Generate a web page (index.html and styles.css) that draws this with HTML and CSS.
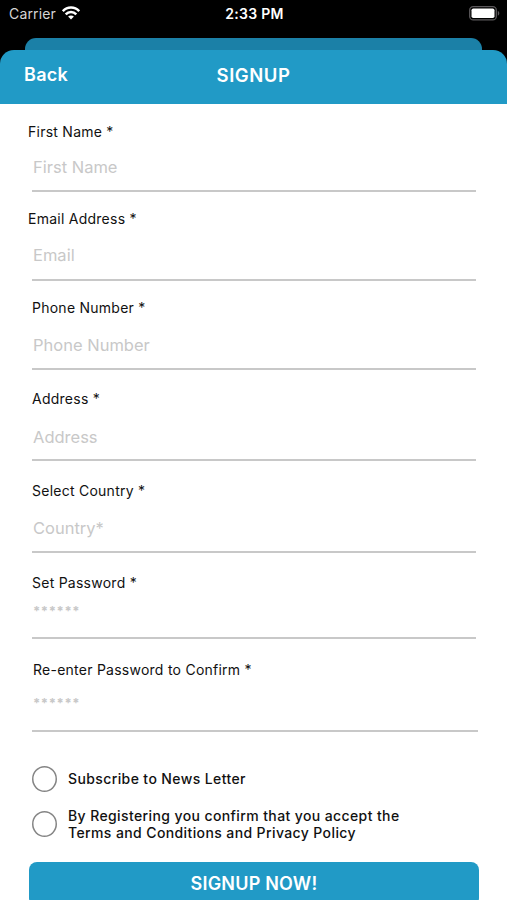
FILE: index.html
```html
<!DOCTYPE html>
<html lang="en">
<head>
<meta charset="utf-8">
<title>Signup</title>
<link rel="stylesheet" href="styles.css">
</head>
<body>
<div class="status">
  <div class="carrier"><span>Carrier</span>
    <svg width="18" height="14" viewBox="0 0 18 14" fill="none" stroke="#fff" stroke-width="2.500"><path d="M.8 5.200C5.200.4 12.800.4 17.200 5.200M3.700 8.300c3-3.200 7.600-3.200 10.600 0"/><path d="M9 13.500 6.100 10.600c1.600-1.600 4.200-1.600 5.800 0z" fill="#fff" stroke="none"/></svg>
  </div>
  <div class="time">2:33 PM</div>
  <svg class="battery" width="31" height="15" viewBox="0 0 31 15"><rect x=".7" y=".7" width="26.600" height="13.200" rx="3.500" fill="none" stroke="#5b585b" stroke-width="1.300"/><rect x="2.500" y="2.500" width="23" height="9.600" rx="1.800" fill="#fff"/><path d="M28.800 5c2 .7 2 4 0 4.700z" fill="#5b585b"/></svg>
</div>
<div class="sheet-behind"></div>
<header class="header">
  <span class="back">Back</span>
  <h1>SIGNUP</h1>
</header>
<form class="form">
  <div class="field first outdent"><label for="a">First Name *</label><input id="a" placeholder="First Name"></div>
  <div class="field email outdent"><label for="b">Email Address *</label><input id="b" placeholder="Email"></div>
  <div class="field phone"><label for="c">Phone Number *</label><input id="c" placeholder="Phone Number"></div>
  <div class="field address"><label for="d">Address *</label><input id="d" placeholder="Address"></div>
  <div class="field country"><label for="e">Select Country *</label><input id="e" placeholder="Country*"></div>
  <div class="field password"><label for="f">Set Password *</label><input id="f" placeholder="******"></div>
  <div class="field confirm"><label for="g">Re-enter Password to Confirm *</label><input id="g" placeholder="******"></div>
  <div class="option subscribe"><span class="radio"></span><span>Subscribe to News Letter</span></div>
  <div class="option terms"><span class="radio"></span><span>By Registering you confirm that you accept the<br>Terms and Conditions and Privacy Policy</span></div>
  <button class="submit" type="button">SIGNUP NOW!</button>
</form>
</body>
</html>
```
FILE: styles.css
```css
* { box-sizing: border-box; }
html { background: #000; }
body {
  margin: 0;
  height: 900px;
  overflow: hidden;
  font-family: Inter, "Liberation Sans", sans-serif;
  background: #000;
}
.status {
  height: 38px;
  padding: 0 7px 0 9px;
  display: grid;
  grid-template-columns: 1fr auto 1fr;
  align-items: start;
  color: #fff;
}
.carrier {
  display: flex;
  gap: 6px;
  padding-top: 5px;
  font-size: 14px;
  line-height: 18px;
  letter-spacing: 0.15px;
  color: #d5d5d5;
}
.carrier svg { margin-top: 1px; }
.time {
  padding-top: 5px;
  font-size: 14px;
  line-height: 18px;
  font-weight: 600;
  letter-spacing: 0.3px;
}
.battery { justify-self: end; margin-top: 6px; }
.sheet-behind {
  height: 12px;
  margin: 0 25px;
  border-radius: 11px 11px 0 0;
  background: #1b80a7;
}
.header {
  height: 54px;
  padding: 0 24px 5px;
  border-radius: 14px 14px 0 0;
  background: #219ac6;
  color: #fff;
  display: grid;
  grid-template-columns: 1fr auto 1fr;
  align-items: center;
}
.back, h1 {
  margin: 0;
  font-size: 18px;
  line-height: 22px;
  font-weight: 600;
}
.back { letter-spacing: 0.3px; }
h1 { font-size: 18.5px; letter-spacing: 0.55px; }
.form {
  height: 796px;
  padding: 0 31px 0 32px;
  background: #fff;
}
.field {
  display: flex;
  flex-direction: column;
  border-bottom: 2px solid #c8c8c8;
}
label {
  font-size: 14px;
  line-height: 20px;
  letter-spacing: 0.25px;
  color: #111;
}
.outdent label { margin-left: -4px; }
input {
  width: 100%;
  height: 24px;
  padding: 0 1px;
  border: 0;
  outline: 0;
  background: none;
  font: 16.5px/24px Inter, "Liberation Sans", sans-serif;
}
input::placeholder { color: #c8c8c8; opacity: 1; }
.first { height: 88px; padding-top: 18px; }
.first label { margin-bottom: 13px; }
.email { height: 89px; padding-top: 17px; }
.email label { margin-bottom: 14px; }
.phone { height: 89px; padding-top: 17px; }
.phone label { margin-bottom: 15px; }
.address { height: 91px; padding-top: 19px; }
.address label { margin-bottom: 16px; }
.country { height: 92px; padding-top: 20px; }
.country label { margin-bottom: 15px; }
.password { height: 86px; padding-top: 20px; }
.password label { margin-bottom: 6px; }
.confirm { height: 93px; padding-top: 21px; margin-right: -2px; }
.confirm label { margin: 0 0 11px 1px; }
.password input, .confirm input { font-size: 13px; font-weight: 700; letter-spacing: 0.6px; }
.option {
  display: flex;
  align-items: center;
  gap: 11px;
  font-size: 14px;
  line-height: 17px;
  font-weight: 500;
  letter-spacing: 0.39px;
  color: #111;
}
.radio {
  width: 25px;
  height: 26px;
  flex: none;
  box-shadow: inset 0 0 0 1.5px #858585;
  border-radius: 50%;
}
.subscribe { height: 26px; margin-top: 34px; }
.subscribe span:last-child { margin-top: -2px; }
.terms { height: 34px; margin-top: 15px; }
.submit {
  display: block;
  width: 450px;
  height: 44px;
  margin: 21px 0 0 -3px;
  padding: 0;
  border: 0;
  border-radius: 8px;
  background: #219ac6;
  color: #fff;
  font: 600 18px/22px Inter, "Liberation Sans", sans-serif;
  letter-spacing: 0.2px;
}
```
